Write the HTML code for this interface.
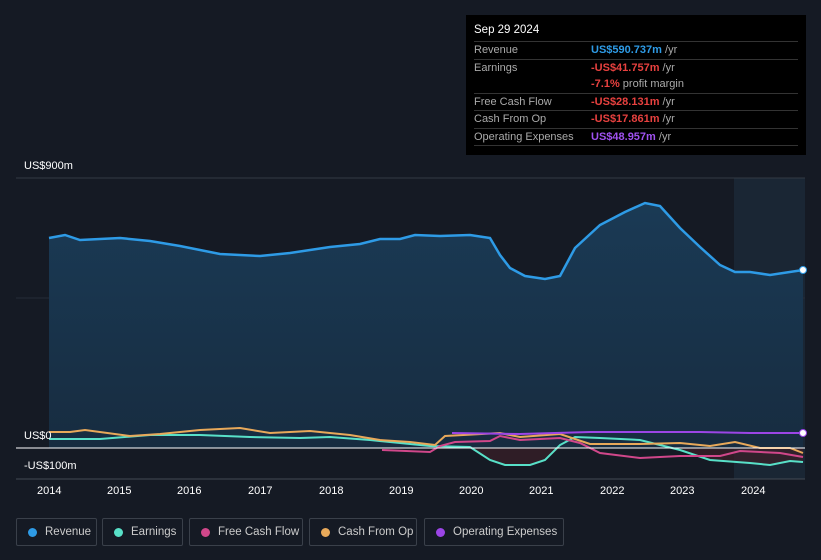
<!DOCTYPE html>
<html><head><style>
body{margin:0;width:821px;height:560px;background:#151a24;font-family:"Liberation Sans",sans-serif;overflow:hidden;position:relative}
.tt{position:absolute;left:466px;top:15px;width:340px;height:140px;background:#000;box-sizing:border-box;padding:9px 8px 0 8px;font-size:11px;color:#aaa}
.tt .h{color:#fff;font-size:11.5px;height:17px}
.tt table{border-collapse:collapse;width:100%}
.tt td{border-top:1px solid #333;height:16.5px;padding:0}
.tt td:first-child{width:117px}
.tt .nb td{border-top:none}
.tt tr.last td{border-bottom:1px solid #333}
.leg{position:absolute;top:518px;height:28px;border:1px solid #3a404a;border-radius:2px;box-sizing:border-box;color:#ccc;font-size:11.5px;line-height:26px;padding-left:28px}
.leg i{position:absolute;left:11px;top:8.5px;width:9px;height:9px;border-radius:50%}
.ax{position:absolute;color:#fff;font-size:11px}
</style></head><body>
<svg width="821" height="560" style="position:absolute;left:0;top:0">
<defs><linearGradient id="g" x1="0" y1="0" x2="0" y2="1"><stop offset="0" stop-color="#1a3a55"/><stop offset="1" stop-color="#172c40"/></linearGradient></defs>
<rect x="734" y="178" width="71" height="301" fill="#1a2634"/>
<line x1="16" y1="178" x2="805" y2="178" stroke="#333a45"/>
<line x1="16" y1="298" x2="805" y2="298" stroke="#252c37"/>
<path d="M49,238 L65,235 L80,240 L120,238 L150,241 L180,246 L220,254 L260,256 L290,253 L330,247 L360,244 L380,239 L400,239 L415,235 L440,236 L470,235 L490,238 L500,255 L510,268 L525,276 L545,279 L560,276 L575,248 L600,225 L625,212 L645,203 L660,206 L680,228 L700,247 L720,265 L735,272 L750,272 L770,275 L803,270 L803,448 L49,448Z" fill="url(#g)"/>
<path d="M49,238 L65,235 L80,240 L120,238 L150,241 L180,246 L220,254 L260,256 L290,253 L330,247 L360,244 L380,239 L400,239 L415,235 L440,236 L470,235 L490,238 L500,255 L510,268 L525,276 L545,279 L560,276 L575,248 L600,225 L625,212 L645,203 L660,206 L680,228 L700,247 L720,265 L735,272 L750,272 L770,275 L803,270" fill="none" stroke="#2e9be6" stroke-width="2.5"/>
<path d="M470,448 L490,460 L505,465 L530,465 L545,460 L560,448Z M680,450 L710,460 L750,463 L770,465 L790,461 L803,462 L803,448 L680,448Z" fill="#3a1f28" opacity="0.7"/>
<path d="M49,439 L100,439 L150,435 L200,435 L250,437 L300,438 L330,437 L370,440 L400,443 L430,446 L470,447 L490,460 L505,465 L530,465 L545,460 L560,445 L575,437 L600,438 L640,440 L680,450 L710,460 L750,463 L770,465 L790,461 L803,462" fill="none" stroke="#58e0c8" stroke-width="2"/>
<path d="M382,450 L430,452 L440,446 L455,442 L490,441 L500,436 L520,440 L560,438 L580,443 L600,453 L640,458 L680,456 L720,456 L740,451 L780,453 L803,457" fill="none" stroke="#d0478a" stroke-width="2"/>
<path d="M49,432 L70,432 L85,430 L130,436 L160,434 L200,430 L240,428 L270,433 L310,431 L350,435 L380,440 L410,442 L435,445 L445,436 L500,433 L520,437 L560,434 L590,444 L640,444 L680,443 L710,446 L735,442 L760,448 L790,448 L803,453" fill="none" stroke="#e8a95a" stroke-width="2"/>
<path d="M452,433 L520,434 L590,432 L700,432 L750,433 L803,433" fill="none" stroke="#9b45e6" stroke-width="2"/>
<line x1="16" y1="448" x2="805" y2="448" stroke="#fff" stroke-width="1"/>
<line x1="16" y1="479" x2="805" y2="479" stroke="#444b55"/>
<circle cx="803" cy="270" r="3.5" fill="#fff" stroke="#2e9be6"/>
<circle cx="803" cy="433" r="3.5" fill="#fff" stroke="#9b45e6"/>
</svg>
<div class="ax" style="left:24px;top:160px">US$900m</div>
<div class="ax" style="left:24px;top:430px">US$0</div>
<div class="ax" style="left:24px;top:460px">-US$100m</div>
<div class="ax" style="left:37px;top:485px;width:800px">
<span style="position:absolute;left:0">2014</span><span style="position:absolute;left:70px">2015</span><span style="position:absolute;left:140px">2016</span><span style="position:absolute;left:211px">2017</span><span style="position:absolute;left:282px">2018</span><span style="position:absolute;left:352px">2019</span><span style="position:absolute;left:422px">2020</span><span style="position:absolute;left:492px">2021</span><span style="position:absolute;left:563px">2022</span><span style="position:absolute;left:633px">2023</span><span style="position:absolute;left:704px">2024</span></div>
<div class="tt"><div class="h">Sep 29 2024</div>
<table>
<tr><td>Revenue</td><td><b style="color:#2e9be6">US$590.737m</b> /yr</td></tr>
<tr><td>Earnings</td><td><b style="color:#e8413f">-US$41.757m</b> /yr</td></tr>
<tr class="nb"><td></td><td><b style="color:#e8413f">-7.1%</b> profit margin</td></tr>
<tr><td>Free Cash Flow</td><td><b style="color:#e8413f">-US$28.131m</b> /yr</td></tr>
<tr><td>Cash From Op</td><td><b style="color:#e8413f">-US$17.861m</b> /yr</td></tr>
<tr class="last"><td>Operating Expenses</td><td><b style="color:#a052f0">US$48.957m</b> /yr</td></tr>
</table></div>
<div class="leg" style="left:16px;width:81px"><i style="background:#2e9be6"></i>Revenue</div>
<div class="leg" style="left:102px;width:81px"><i style="background:#58e0c8"></i>Earnings</div>
<div class="leg" style="left:189px;width:114px"><i style="background:#d0478a"></i>Free Cash Flow</div>
<div class="leg" style="left:309px;width:108px"><i style="background:#e8a95a"></i>Cash From Op</div>
<div class="leg" style="left:424px;width:140px"><i style="background:#9b45e6"></i>Operating Expenses</div>
</body></html>
